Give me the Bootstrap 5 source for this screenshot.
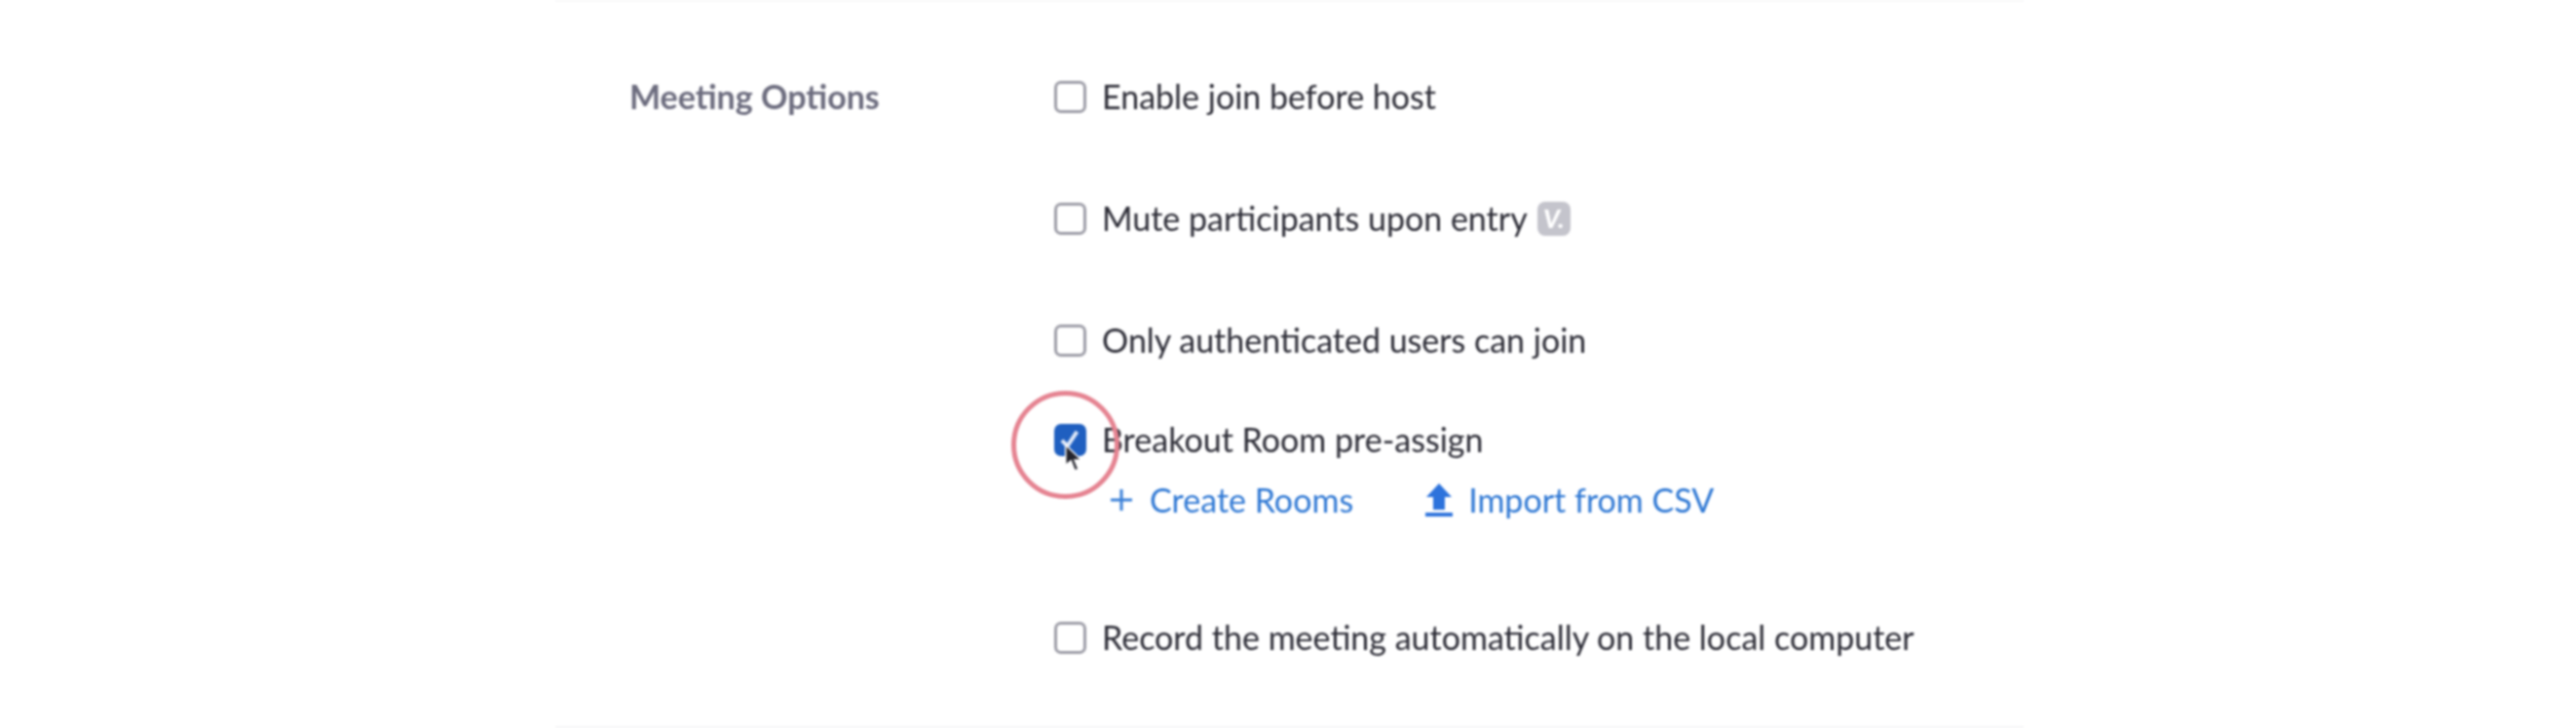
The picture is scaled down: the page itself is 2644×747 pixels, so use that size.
<!DOCTYPE html>
<html lang="en">
<head>
  <meta charset="UTF-8">
  <title>Meeting Options</title>
  <link rel="stylesheet" href="https://cdn.jsdelivr.net/npm/bootstrap@5.3.0/dist/css/bootstrap.min.css">
  <style>
    body { background: #fff; font-family: Lato, "Liberation Sans", sans-serif; color: #2c2c36; }
    .options-wrap { width: 1507px; height: 747px; margin-left: 570px; border-top: 2px solid #f8f8f9; border-bottom: 2px solid #f5f5f7; padding: 65px 0 0 76px; filter: blur(.8px); }
    .opt-label { width: 436px; font-size: 34px; font-weight: 700; color: #6c6c7e; line-height: 64px; flex: none; }
    .opt-row { height: 64px; margin-bottom: 61px; font-size: 34px; line-height: 64px; }
    .opt-row.tight { margin-bottom: 38px; }
    .opt-row.last { margin-top: 77px; }
    .opt-row .form-check-input { width: 33px; height: 33px; margin: 0 16px 0 0; flex: none; border: 3px solid #9c9ca6; border-radius: 7px; float: none; }
    .opt-row .form-check-input:checked { background-color: #1f5fc0; border-color: #1f5fc0; background-size: 100%; background-image: url("data:image/svg+xml,%3csvg xmlns='http://www.w3.org/2000/svg' viewBox='0 0 33 33'%3e%3cpath fill='none' stroke='%23dfe9f8' stroke-width='5' d='M6 17l7 7L25 6'/%3e%3c/svg%3e"); }
    .opt-row label { white-space: nowrap; }
    .vip-tag { width: 34px; height: 35px; margin-left: 10px; border-radius: 8px; background: #c4c4cc; color: #fff; font-size: 26px; font-weight: 900; font-style: italic; line-height: 35px; }
    .sub-links { height: 64px; margin: -2px 0 0 58px; font-size: 34px; line-height: 64px; }
    .sub-links a { color: #2f78d4; text-decoration: none; }
    .link-text { margin-left: 2px; margin-right: 2px; }
    .click-ring { position: absolute; left: -44px; top: -18px; width: 111px; height: 111px; border: 5px solid #e58391; border-radius: 50%; pointer-events: none; }
    .cursor-mark { position: absolute; left: 10px; top: 36px; width: 19px; height: 31px; pointer-events: none; }
  </style>
</head>
<body>
  <div class="options-wrap d-flex">
    <div class="opt-label">Meeting Options</div>
    <div class="flex-grow-1">
      <div class="opt-row d-flex align-items-center">
        <input class="form-check-input" type="checkbox" id="joinFirst">
        <label for="joinFirst">Enable join before host</label>
      </div>
      <div class="opt-row d-flex align-items-center">
        <input class="form-check-input" type="checkbox" id="muteEntry">
        <label for="muteEntry">Mute participants upon entry</label>
        <span class="vip-tag d-inline-flex justify-content-center">V.</span>
      </div>
      <div class="opt-row tight d-flex align-items-center">
        <input class="form-check-input" type="checkbox" id="authOnly">
        <label for="authOnly">Only authenticated users can join</label>
      </div>
      <div class="opt-row d-flex align-items-center position-relative mb-0">
        <input class="form-check-input" type="checkbox" id="breakout" checked>
        <label for="breakout">Breakout Room pre-assign</label>
        <span class="click-ring"></span>
        <svg class="cursor-mark" viewBox="0 0 24 40"><path d="M2 2v27l7-6 5 13 5-2-5-12h9z" fill="#23232b" stroke="#fff" stroke-width="2"/></svg>
      </div>
      <div class="sub-links d-flex align-items-center">
        <a href="#" class="d-flex align-items-center gap-3 me-4">
          <svg width="22" height="22" viewBox="0 0 22 22"><path d="M11 0v22M0 11h22" stroke="#3b80d8" stroke-width="3" fill="none"/></svg>
          <span class="link-text">Create Rooms</span>
        </a>
        <a href="#" class="d-flex align-items-center gap-3 ms-5">
          <svg width="28" height="36" viewBox="0 0 28 36"><path d="M14 1 27 15h-7v13H8V15H1z" fill="#2d73dc"/><path d="M0 33h28" stroke="#2d73dc" stroke-width="4"/></svg>
          Import from CSV
        </a>
      </div>
      <div class="opt-row last d-flex align-items-center mb-0">
        <input class="form-check-input" type="checkbox" id="recordAuto">
        <label for="recordAuto">Record the meeting automatically on the local computer</label>
      </div>
    </div>
  </div>
  <script src="https://cdn.jsdelivr.net/npm/bootstrap@5.3.0/dist/js/bootstrap.bundle.min.js"></script>
</body>
</html>
